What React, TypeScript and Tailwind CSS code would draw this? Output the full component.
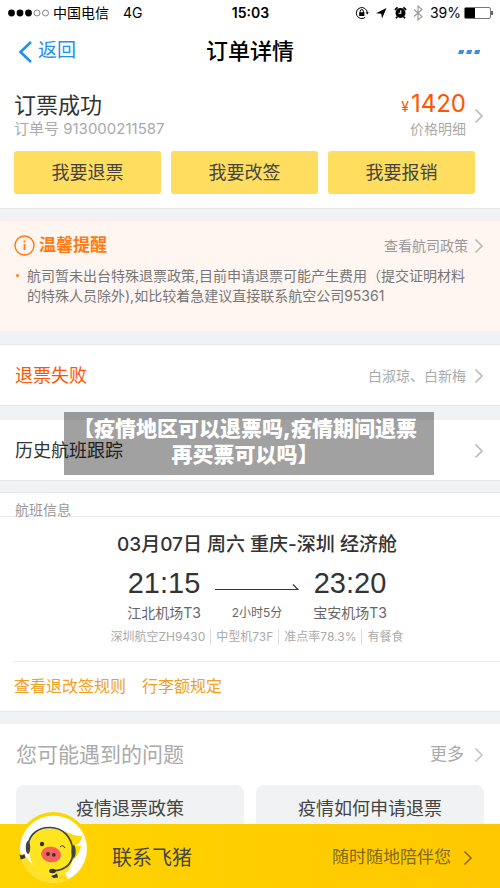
import type { ReactNode } from "react";

function Chevron({ className = "text-[#b8b8b8]" }: { className?: string }) {
  return (
    <svg viewBox="0 0 10 16" className={"h-4 w-[10px] shrink-0 " + className} fill="none" stroke="currentColor" strokeWidth="1.6" aria-hidden="true">
      <path d="M1.5 1.5 8 8l-6.5 6.5" />
    </svg>
  );
}

function StatusBar() {
  return (
    <div className="grid h-[25px] grid-cols-[1fr_auto_1fr] items-center pr-[7px] pl-2 text-sm text-black">
      <div className="flex items-center">
        <svg viewBox="0 0 42 8" className="mr-[3px] h-2 w-[42px]" aria-hidden="true">
          <circle cx="3.5" cy="4" r="3.4" />
          <circle cx="12" cy="4" r="3.4" />
          <circle cx="20.5" cy="4" r="3.4" />
          <circle cx="29" cy="4" r="3" fill="none" stroke="#555" strokeWidth=".7" />
          <circle cx="37.5" cy="4" r="3" fill="none" stroke="#555" strokeWidth=".7" />
        </svg>
        <span>中国电信</span>
        <span className="ml-[14px]">4G</span>
      </div>
      <div className="font-semibold">15:03</div>
      <div className="flex items-center justify-end">
        <svg viewBox="0 0 14 14" className="mr-[6px] h-[14px] w-[14px]" fill="none" stroke="#000" strokeWidth="1" aria-hidden="true">
          <path d="M10.2 11.4A5.5 5.5 0 1 1 12.3 6.5" />
          <path d="M10.6 6.3h3.2l-1.6 2.2z" fill="#000" stroke="none" />
          <rect x="4.2" y="6.2" width="5.2" height="3.8" fill="#000" stroke="none" />
          <path d="M5.2 6.5V5.2a1.6 1.6 0 0 1 3.2 0v1.3" />
        </svg>
        <svg viewBox="0 0 12 12" className="mr-[7px] h-3 w-3" aria-hidden="true">
          <path d="M11.5 1 7 11.5 6.3 6.8 1 6.3z" />
        </svg>
        <svg viewBox="0 0 14 14" className="mr-[6px] h-[13px] w-[13px]" aria-hidden="true">
          <circle cx="7" cy="7.5" r="5.4" />
          <path d="M1 4.2 3.8 1.5M13 4.2l-2.8-2.7M3.5 11.5l-1.3 1.7M10.5 11.5l1.3 1.7" stroke="#000" strokeWidth="1.8" />
          <path d="M7.3 4.5v3.3H4.8" fill="none" stroke="#fff" strokeWidth="1.2" />
        </svg>
        <svg viewBox="0 0 10 16" className="mr-[7px] h-4 w-[10px]" fill="none" stroke="#999" strokeWidth="1.1" aria-hidden="true">
          <path d="m1 4.5 8 7L5 15V1l4 3.5-8 7" />
        </svg>
        <span className="mr-[3px]">39%</span>
        <svg viewBox="0 0 29 12" className="h-3 w-[29px]" aria-hidden="true">
          <rect x=".5" y=".5" width="26" height="11" rx="1.5" fill="none" stroke="#777" />
          <rect x="1" y="1" width="10" height="10" />
          <path d="M28 4v4" stroke="#333" strokeWidth="1.5" />
        </svg>
      </div>
    </div>
  );
}

function Header() {
  return (
    <header className="grid h-[55px] grid-cols-[1fr_auto_1fr] items-center px-[18px] pb-[2px]">
      <button type="button" className="flex items-center gap-[6px] text-[19px] text-[#2090f0]">
        <svg viewBox="0 0 14 22" className="h-[22px] w-[14px]" fill="none" stroke="currentColor" strokeWidth="2.6" aria-hidden="true">
          <path d="M13 1 2.5 11 13 21" />
        </svg>
        返回
      </button>
      <h1 className="text-[22px] font-medium text-black">订单详情</h1>
      <button type="button" aria-label="更多操作" className="justify-self-end">
        <svg viewBox="0 0 24 4" className="h-1 w-6" fill="#3d8fe6" aria-hidden="true">
          <path d="M1.3 0h5L5 4H0zM9.3 0h5L13 4H8zM17.3 0h5L21 4h-5z" />
        </svg>
      </button>
    </header>
  );
}

function Summary() {
  return (
    <section className="border-b border-[#e4e6e8] bg-white pb-[14px] pl-[14px]">
      <div className="flex items-center justify-between pt-3 pr-4 text-sm">
        <div>
          <h2 className="text-[22px] leading-6 text-[#333]">订票成功</h2>
          <p className="mt-[2px] text-[15px] leading-5 text-[#aaa]">订单号 913000211587</p>
        </div>
        <a href="#price" className="flex items-center gap-2">
          <span className="text-right">
            <span className="block leading-6 text-[#ff5500]">
              <span className="mr-[2px]">¥</span>
              <span className="text-2xl leading-6">1420</span>
            </span>
            <span className="block leading-5 text-[#aaa]">价格明细</span>
          </span>
          <Chevron />
        </a>
      </div>
      <div className="mt-3 grid grid-cols-3 gap-[10px] pr-[25px]">
        {["我要退票", "我要改签", "我要报销"].map((t) => (
          <button key={t} type="button" className="h-[43px] rounded-[3px] bg-[#ffdd5f] text-lg text-[#444]">
            {t}
          </button>
        ))}
      </div>
    </section>
  );
}

function Notice() {
  return (
    <section className="mt-[11px] h-[111px] border-t border-[#fdeae0] bg-[#fff6f1] pt-[14px] pr-4 pl-[14px]">
      <div className="flex h-[21px] items-center justify-between">
        <h2 className="flex items-center gap-1 text-[17px] font-bold text-[#ff7a10]">
          <svg viewBox="0 0 21 21" className="h-[21px] w-[21px]" fill="none" stroke="currentColor" strokeWidth="1.4" aria-hidden="true">
            <circle cx="10.5" cy="10.5" r="9.5" />
            <path d="M10.5 9v6M10.5 5.5v2" strokeWidth="1.8" />
          </svg>
          温馨提醒
        </h2>
        <a href="#policy" className="flex items-center gap-[6px] text-sm text-[#999]">
          查看航司政策
          <Chevron />
        </a>
      </div>
      <ul className="mt-[10px] pr-2">
        <li className="flex text-sm leading-5 text-[#777]">
          <span className="mt-2 mr-2 ml-[2px] h-[3px] w-[3px] shrink-0 rounded-full bg-[#ff7a10]" />
          <span>航司暂未出台特殊退票政策,目前申请退票可能产生费用（提交证明材料的特殊人员除外),如比较着急建议直接联系航空公司95361</span>
        </li>
      </ul>
    </section>
  );
}

function Row({ title, children }: { title: ReactNode; children?: ReactNode }) {
  return (
    <a href="#detail" className="flex h-[60px] items-center justify-between pt-[2px] pr-4 pl-[15px] text-lg">
      {title}
      <span className="flex items-center gap-2 text-sm text-[#aaa]">
        {children}
        <Chevron />
      </span>
    </a>
  );
}

function Flight() {
  return (
    <section className="mt-[11px] border-y border-[#e4e6e8] bg-white pl-[14px] text-[#333]">
      <h2 className="-ml-[14px] flex h-6 items-end border-b border-[#ececec] pl-[15px] text-sm leading-3 text-[#999]">航班信息</h2>
      <div className="flex flex-col items-center pt-4">
        <h3 className="text-[19px] leading-6 font-medium">03月07日 周六 重庆-深圳 经济舱</h3>
        <div className="mt-2 grid grid-cols-[78px_84px_78px] items-center gap-x-[12px] text-center">
          <time className="font-[Liberation_Sans] text-[29px] leading-9">21:15</time>
          <svg viewBox="0 0 84 8" className="mt-2 h-2 w-[84px]" fill="none" stroke="#333" strokeWidth="1.2" aria-hidden="true">
            <path d="M0 6.5h83l-5-5" />
          </svg>
          <time className="font-[Liberation_Sans] text-[29px] leading-9">23:20</time>
          <span className="text-sm leading-6 whitespace-nowrap text-[#666]">江北机场T3</span>
          <span className="text-xs text-[#666]">2小时5分</span>
          <span className="text-sm leading-6 whitespace-nowrap text-[#666]">宝安机场T3</span>
        </div>
        <ul className="mt-1 flex text-xs leading-4 text-[#aaa]">
          <li className="pr-[5px]">深圳航空ZH9430</li>
          <li className="border-l border-[#ddd] px-[5px]">中型机73F</li>
          <li className="border-l border-[#ddd] px-[5px]">准点率78.3%</li>
          <li className="border-l border-[#ddd] pl-[5px]">有餐食</li>
        </ul>
      </div>
      <div className="mt-4 flex h-[50px] items-center gap-4 border-t border-[#ececec] pb-[2px] text-base text-[#f0a01c]">
        <a href="#rules">查看退改签规则</a>
        <a href="#baggage">行李额规定</a>
      </div>
    </section>
  );
}

function Faq() {
  return (
    <section className="mt-3 bg-white px-4">
      <div className="flex h-[61px] items-center justify-between text-[#aaa]">
        <h2 className="text-[21px]">您可能遇到的问题</h2>
        <a href="#more" className="flex items-center gap-[10px] text-[17px]">
          更多
          <Chevron className="text-[#c4c4c4]" />
        </a>
      </div>
      <div className="grid grid-cols-2 gap-3">
        {["疫情退票政策", "疫情如何申请退票"].map((t) => (
          <button key={t} type="button" className="h-[47px] rounded-lg bg-[#f0f2f4] text-lg text-[#444]">
            {t}
          </button>
        ))}
      </div>
    </section>
  );
}

function PigAvatar() {
  return (
    <svg viewBox="0 0 72 76" className="absolute -top-[13px] left-[17px] h-[76px] w-[72px]" aria-hidden="true">
      <circle cx="36.5" cy="37" r="36" fill="#ffd500" />
      <circle cx="36.5" cy="38" r="33.5" fill="#fff" />
      <clipPath id="face">
        <circle cx="36.5" cy="38" r="33.5" />
      </clipPath>
      <g clipPath="url(#face)">
        <path d="M48 20q8 5 17 5-1 7-7 10l6 0q-2 10-10 16z" fill="#ffdb00" />
        <path d="M2 42 8 44Q18 60 34 64l14-3 6 14H26Q4 70 1 48z" fill="#ffe12a" />
        <path d="M33 17.5c-14 0-22 9-21 22 1 15 9 26 26 27l13-6c4-6 5-12 4-21-2-13-8-22-22-22z" fill="#ffe51f" />
        <path d="M42 67q7-4 8 6" fill="none" stroke="#f3c400" strokeWidth=".8" />
      </g>
      <path d="M11 34c2-12 11-17.500 22-17.500 13 0 22 10 23 23.500 0 12-7 19-20 20" fill="none" stroke="#3b4548" strokeWidth="1.700" />
      <ellipse cx="11" cy="36.5" rx="2.2" ry="6.5" fill="#3b4548" />
      <ellipse cx="56.5" cy="40.5" rx="2.2" ry="6.5" fill="#3b4548" />
      <ellipse cx="34" cy="43.5" rx="10" ry="7.8" fill="#fa605b" transform="rotate(8 34 43.5)" />
      <circle cx="31" cy="43" r="1.9" fill="#333" />
      <circle cx="36.8" cy="43.8" r="1.9" fill="#333" />
      <circle cx="25" cy="33" r="2.2" fill="#333" />
      <path d="M43 36q3-3 5 1" fill="none" stroke="#333" strokeWidth="1" />
      <ellipse cx="35.500" cy="60" rx="3.400" ry="2.200" fill="#333" />
      <path d="m2.500 43.500 2.500 1 2.500-1.500.8 4-4.500 1.500zM34 65l3-1 3-1.500 1 4-4.500.5z" fill="#333" />
    </svg>
  );
}

function SupportBar() {
  return (
    <a href="#support" className="sticky bottom-0 -mt-2 flex h-16 items-center justify-between bg-linear-to-r from-[#ffd400] to-[#ffc800] pt-[3px] pr-[27px] pl-28">
      <PigAvatar />
      <span className="text-xl text-[#444]">联系飞猪</span>
      <span className="flex items-center gap-3 text-[17px] text-[#806a1c]">
        随时随地陪伴您
        <Chevron className="text-[#8a6d00]" />
      </span>
    </a>
  );
}

export default function App() {
  return (
    <div className="min-h-screen bg-[#f0f2f4] font-[Inter,Noto_Sans_CJK_SC,sans-serif]">
      <div className="bg-white">
        <StatusBar />
        <Header />
      </div>
      <main>
        <Summary />
        <Notice />
        <section className="mt-[13px] border-y border-[#e4e6e8] bg-white">
          <Row title={<span className="text-[#ff5500]">退票失败</span>}>白淑琼、白新梅</Row>
        </section>
        <section className="relative mt-[14px] border-b border-[#e4e6e8] bg-white">
          <Row title={<span className="text-[#333]">历史航班跟踪</span>} />
          <div className="absolute inset-x-16 -top-2 mr-[2px] h-[63px] bg-black/37 pt-1 pr-2 text-center text-[21px] leading-[26px] font-black text-white">
            【疫情地区可以退票吗,疫情期间退票
            <br />
            再买票可以吗】
          </div>
        </section>
        <Flight />
        <Faq />
      </main>
      <SupportBar />
    </div>
  );
}
